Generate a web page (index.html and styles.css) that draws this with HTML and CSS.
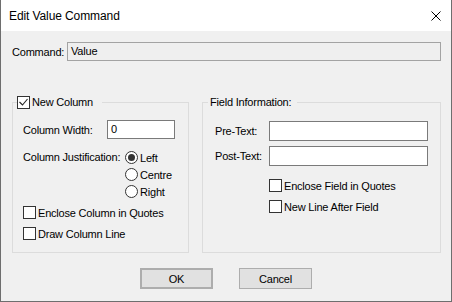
FILE: index.html
```html
<!DOCTYPE html>
<html lang="en">
<head>
  <meta charset="UTF-8">
  <title>Edit Value Command</title>
  <link rel="stylesheet" href="styles.css">
</head>
<body>
  <div class="dialog">
    <div class="titlebar">
      <span class="title">Edit Value Command</span>
      <span class="close">
        <svg width="10" height="10" viewBox="0 0 10 10">
          <path d="M0.5 0.5 L9.5 9.5 M9.5 0.5 L0.5 9.5" stroke="#000" stroke-width="1" fill="none"/>
        </svg>
      </span>
    </div>

    <div class="content">
      <div class="command-row">
        <span class="command-label">Command:</span>
        <div class="readonly-field">Value</div>
      </div>

      <div class="groups">
        <!-- New Column group -->
        <fieldset class="group">
          <legend class="legend legend-check">
            <span class="check">
              <svg width="11" height="11" viewBox="0 0 11 11">
                <path d="M1.5 5 L4.5 8 L9.5 2" stroke="#222" stroke-width="1.1" fill="none"/>
              </svg>
            </span>
            New Column
          </legend>
          <div class="group-body column-body">
            <div class="field-row">
              <span class="label width-label">Column Width:</span>
              <div class="text-input short-input">0</div>
            </div>
            <div class="justify-row">
              <span class="label justify-label">Column Justification:</span>
              <div class="radio-list">
                <div class="radio-row"><span class="radio selected"></span>Left</div>
                <div class="radio-row"><span class="radio"></span>Centre</div>
                <div class="radio-row"><span class="radio"></span>Right</div>
              </div>
            </div>
            <div class="check-list">
              <div class="check-row"><span class="check"></span>Enclose Column in Quotes</div>
              <div class="check-row"><span class="check"></span>Draw Column Line</div>
            </div>
          </div>
        </fieldset>

        <!-- Field Information group -->
        <fieldset class="group">
          <legend class="legend legend-text">Field Information:</legend>
          <div class="group-body field-body">
            <div class="field-row">
              <span class="label text-label">Pre-Text:</span>
              <div class="text-input long-input"></div>
            </div>
            <div class="field-row post-row">
              <span class="label text-label">Post-Text:</span>
              <div class="text-input long-input"></div>
            </div>
            <div class="check-list field-checks">
              <div class="check-row"><span class="check"></span>Enclose Field in Quotes</div>
              <div class="check-row"><span class="check"></span>New Line After Field</div>
            </div>
          </div>
        </fieldset>
      </div>

      <div class="buttons">
        <button class="btn btn-default">OK</button>
        <button class="btn">Cancel</button>
      </div>
    </div>
  </div>
</body>
</html>
```

FILE: styles.css
```css
body {
  margin: 0;
  font-family: "Liberation Sans", Arial, sans-serif;
  font-size: 11px;
  letter-spacing: -0.2px;
  color: #000;
  background: #f0f0f0;
}

.dialog {
  width: 452px;
  height: 302px;
  box-sizing: border-box;
  border: 1px solid #6e6e6e;
  border-top: none;
  background: #f0f0f0;
  display: flex;
  flex-direction: column;
}

.titlebar {
  height: 31px;
  background: #fff;
  display: flex;
  align-items: center;
  justify-content: space-between;
  padding: 0 10px 0 8px;
}

.title {
  font-size: 12px;
  letter-spacing: -0.1px;
  margin-top: 1px;
}

.close {
  display: flex;
  margin-top: 1px;
}

.content {
  padding: 11px 10px 0 11px;
}

/* command row */
.command-row {
  display: flex;
  align-items: center;
  height: 19px;
}

.command-label {
  width: 55px;
}

.readonly-field {
  flex: 1;
  height: 19px;
  box-sizing: border-box;
  border: 1px solid #a3a3a3;
  background: #efefef;
  padding: 0 3px;
  line-height: 17px;
}

/* group boxes */
.groups {
  display: grid;
  grid-template-columns: 177px 1fr;
  gap: 13px;
  margin-top: 34px;
  height: 158px;
}

.group {
  margin: 0;
  padding: 0;
  min-width: 0;
  border: 1px solid #dcdcdc;
}

.legend {
  display: flex;
  align-items: center;
  height: 14px;
}

.legend-check {
  margin-left: 4px;
  padding: 0 9px 0 0;
}

.legend-text {
  margin-left: 5px;
  padding: 0 6px 0 2px;
}

.group-body {
  display: flex;
  flex-direction: column;
}

.column-body {
  padding: 11px 0 0 10px;
}

.field-body {
  padding: 12px 0 0 12px;
}

.field-row {
  display: flex;
  align-items: center;
}

.width-label {
  width: 84px;
}

.text-label {
  width: 54px;
}

.text-input {
  box-sizing: border-box;
  border: 1px solid #7a7a7a;
  background: #fff;
  padding: 0 3px;
}

.short-input {
  width: 68px;
  height: 19px;
  line-height: 17px;
}

.long-input {
  width: 159px;
  height: 20px;
}

.post-row {
  margin-top: 5px;
}

/* justification radios */
.justify-row {
  display: flex;
  align-items: flex-start;
  margin-top: 10px;
}

.justify-label {
  width: 102px;
  line-height: 17px;
}

.radio-row {
  display: flex;
  align-items: center;
  height: 17px;
}

.radio {
  width: 13px;
  height: 13px;
  box-sizing: border-box;
  border: 1px solid #333;
  border-radius: 50%;
  background: #fff;
  margin-right: 2px;
  display: flex;
  align-items: center;
  justify-content: center;
}

.radio.selected::after {
  content: "";
  width: 7px;
  height: 7px;
  border-radius: 50%;
  background: #333;
}

/* checkboxes */
.check-list {
  margin-top: 2px;
}

.field-checks {
  margin-top: 9px;
  padding-left: 54px;
}

.check-row {
  display: flex;
  align-items: center;
  height: 21px;
}

.check {
  width: 13px;
  height: 13px;
  box-sizing: border-box;
  border: 1px solid #333;
  background: #fff;
  margin-right: 2px;
  display: flex;
  align-items: center;
  justify-content: center;
}

/* buttons */
.buttons {
  display: flex;
  justify-content: center;
  gap: 26px;
  margin-top: 15px;
  padding-right: 1px;
}

.btn {
  width: 73px;
  height: 21px;
  box-sizing: border-box;
  border: 1px solid #adadad;
  background: #e1e1e1;
  font-family: "Liberation Sans", Arial, sans-serif;
  font-size: 11px;
  letter-spacing: -0.2px;
  color: #000;
  padding: 0;
}

.btn-default {
  border: 2px solid #adadad;
}
```
